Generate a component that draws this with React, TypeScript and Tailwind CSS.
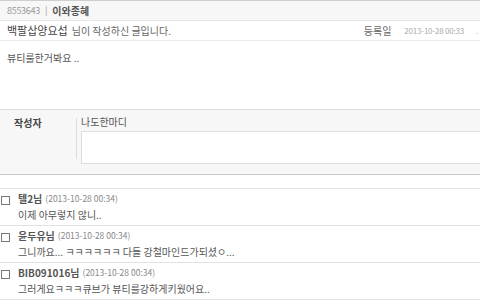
const comments = [
  { name: "텔2님", date: "(2013-10-28 00:34)", text: "이제 아무렇지 않니.." },
  { name: "윤두유님", date: "(2013-10-28 00:34)", text: "그니까요... ㅋㅋㅋㅋㅋㅋ 다들 강철마인드가되셨ㅇ..." },
  { name: "BIB091016님", date: "(2013-10-28 00:34)", text: "그러게요ㅋㅋㅋ큐브가 뷰티를강하게키웠어요.." },
];

function App() {
  return (
    <div
      className="h-[306px] w-[480px] overflow-hidden bg-white text-[11px] text-[#555]"
      style={{ fontFamily: '"Noto Sans CJK KR", "Liberation Sans", sans-serif' }}
    >
      <div className="flex h-[21px] items-center gap-[5px] border-t border-b border-t-[#cfcfcf] border-b-[#e6e6e6] bg-[#f7f7f7] pl-[7px]">
        <span className="text-[9px] tracking-[-0.3px] text-[#999]">8553643</span>
        <span className="text-[9px] text-[#999]">|</span>
        <span className="text-[10px] font-bold text-[#555]">이와종혜</span>
      </div>
      <div className="flex h-[20px] items-center border-b border-[#ebebeb] pl-[7px] whitespace-nowrap">
        <span className="text-[11px] text-[#444]">백팔삽양요섭</span>
        <span className="ml-[4px] text-[10px] text-[#666]">님이 작성하신 글입니다.</span>
        <span className="ml-auto text-[10px] text-[#666]">등록일</span>
        <span className="ml-[13px] text-[8px] tracking-[-0.2px] text-[#aaa]">2013-10-28 00:33</span>
        <span className="ml-[12px] w-[4px] text-[8px] text-[#aaa]">.</span>
      </div>
      <div className="h-[68px] pl-[7px] pt-[9px] text-[10px] text-[#555]">뷰티룰한거봐요 ..</div>
      <div className="flex h-[66px] border-t border-b border-t-[#dcdcdc] border-b-[#c9c9c9] bg-[#f7f7f7]">
        <div className="w-[76px] pl-[14px] pt-[5px] text-[10px] font-bold text-[#444]">작성자</div>
        <div className="mt-[8px] mb-[15px] w-px bg-[#ddd]" />
        <div className="-mr-[6px] flex flex-1 flex-col pl-[4px] pt-[4px]">
          <span className="text-[10px] text-[#555]">나도한마디</span>
          <div className="mt-[2px] h-[33px] border border-[#ddd] bg-white" />
        </div>
      </div>
      <div className="h-[13px]" />
      <div className="border-t border-[#e2e2e2]">
        {comments.map((c) => (
          <div key={c.name} className="flex h-[37px] border-b border-[#e2e2e2]">
            <div className="w-[18px] pl-[1px] pt-[7px]">
              <span className="block h-[9px] w-[9px] border border-[#777] bg-white" />
            </div>
            <div className="flex flex-col">
              <div className="flex h-[18px] items-center gap-[3px] whitespace-nowrap">
                <span className="text-[10px] font-bold text-[#555]">{c.name}</span>
                <span className="text-[8.5px] text-[#888]">{c.date}</span>
              </div>
              <span className="text-[10px] text-[#555] whitespace-nowrap">{c.text}</span>
            </div>
          </div>
        ))}
      </div>
    </div>
  );
}

export default App;
